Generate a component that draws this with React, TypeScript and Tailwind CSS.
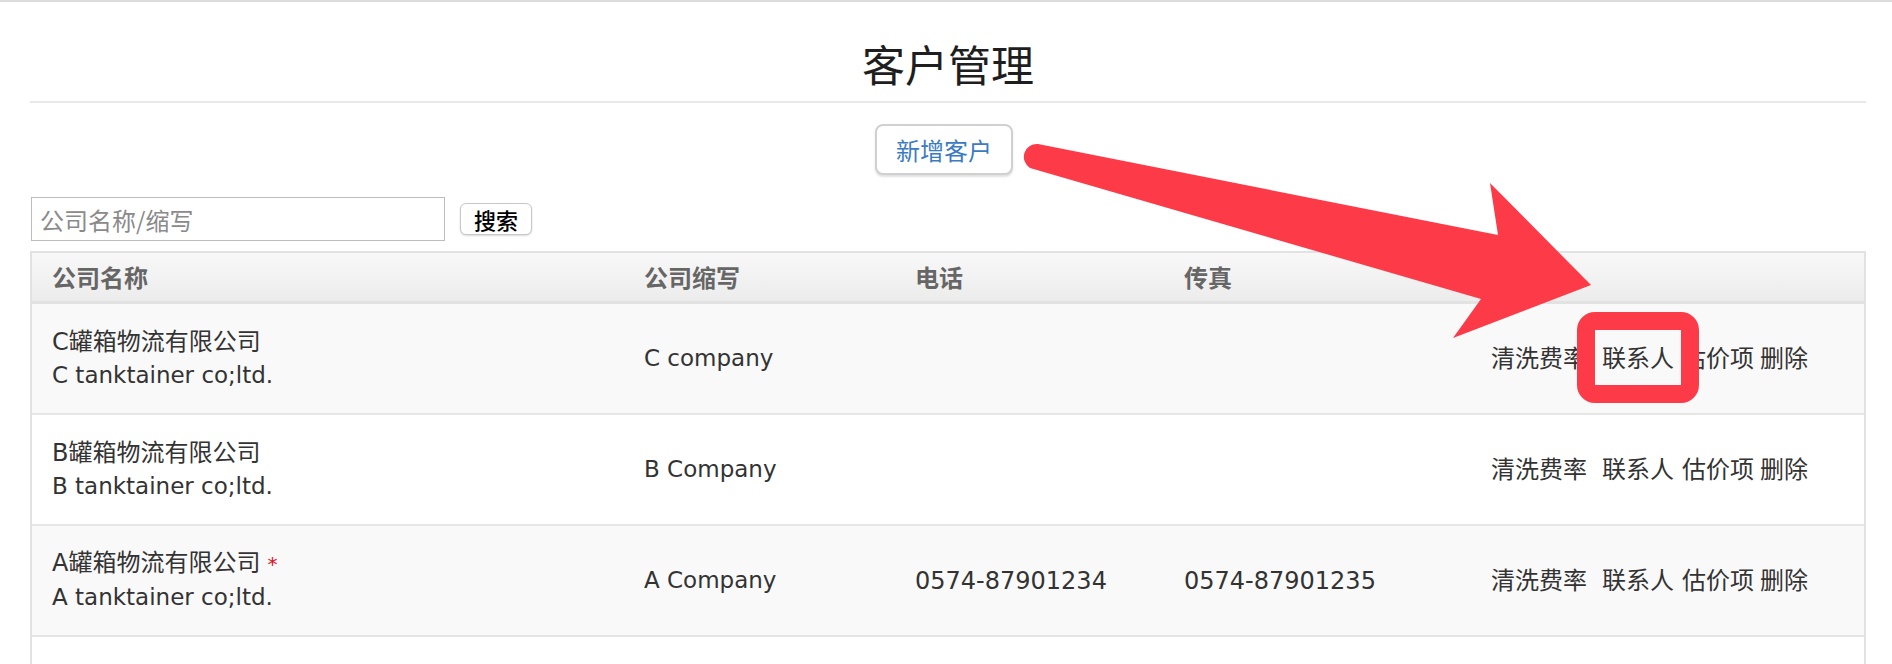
import React from "react";

type Row = {
  cn: string;
  en: string;
  star?: boolean;
  abbr: string;
  tel: string;
  fax: string;
};

const rows: Row[] = [
  { cn: "C罐箱物流有限公司", en: "C tanktainer co;ltd.", abbr: "C company", tel: "", fax: "" },
  { cn: "B罐箱物流有限公司", en: "B tanktainer co;ltd.", abbr: "B Company", tel: "", fax: "" },
  {
    cn: "A罐箱物流有限公司",
    en: "A tanktainer co;ltd.",
    star: true,
    abbr: "A Company",
    tel: "0574-87901234",
    fax: "0574-87901235",
  },
];

function Actions() {
  return (
    <div className="flex items-center whitespace-nowrap text-[24px] text-[#333]">
      <span className="mr-[15px]">清洗费率</span>
      <span className="mr-[8px]">联系人</span>
      <span className="mr-[6px]">估价项</span>
      <span>删除</span>
    </div>
  );
}

export default function App() {
  return (
    <div className="relative h-[664px] w-[1892px] overflow-hidden bg-white font-['DejaVu_Sans','Noto_Sans_CJK_SC',sans-serif] text-[#333]">
      <div className="border-t-2 border-[#dcdcdc]">
        <div className="ml-[30px] w-[1836px]">
          <div className="h-[99px] pt-[38px] text-center text-[43px] leading-[46px] text-[#1e1e1e] font-['Noto_Sans_CJK_SC',sans-serif]">
            客户管理
          </div>
          <div className="h-[2px] bg-[#e9e9e9]" />
          <div className="mt-[21px] flex justify-center pr-[8px]">
            <button className="h-[51px] w-[138px] rounded-[8px] border-2 border-[#d0d0d0] bg-white text-[24px] leading-none text-[#3a7bc2] shadow-[0_2px_2px_rgba(0,0,0,0.12)] font-['Noto_Sans_CJK_SC',sans-serif]">
              新增客户
            </button>
          </div>
          <div className="mt-[22px] flex h-[44px] items-center">
            <input
              className="ml-[1px] h-[44px] w-[414px] border border-[#bdbdbd] px-[8px] text-[24px] text-[#333] outline-none placeholder:text-[#8a8a8a] font-['Noto_Sans_CJK_SC',sans-serif]"
              placeholder="公司名称/缩写"
            />
            <button className="ml-[15px] h-[32px] w-[72px] rounded-[6px] border border-[#c8c8c8] bg-white text-[22px] font-medium leading-none text-black shadow-[0_1px_2px_rgba(0,0,0,0.15)] font-['Noto_Sans_CJK_SC',sans-serif]">
              搜索
            </button>
          </div>

          <div className="mt-[10px] border-x-2 border-t-2 border-[#e2e2e2]">
            <div className="grid h-[51px] grid-cols-[592px_271px_269px_307px_1fr] items-center border-b-[3px] border-[#e2e2e2] bg-linear-to-b from-[#f8f8f8] to-[#ececec] pt-[4px] text-[24px] font-bold text-[#666]">
              <div className="pl-[20px]">公司名称</div>
              <div className="pl-[20px]">公司缩写</div>
              <div className="pl-[20px]">电话</div>
              <div className="pl-[20px]">传真</div>
              <div className="pl-[20px]" />
            </div>
            {rows.map((r, i) => (
              <div
                key={i}
                className={`grid h-[111px] grid-cols-[592px_271px_269px_307px_1fr] items-center border-b-2 border-[#e6e6e6] text-[24px] ${
                  i % 2 === 0 ? "bg-[#f9f9f9]" : "bg-white"
                }`}
              >
                <div className="pl-[20px] leading-[33px]">
                  <div>
                    {r.cn}
                    {r.star && <span className="ml-[7px] text-[20px] text-[#e0101e]">*</span>}
                  </div>
                  <div className="text-[23px]">{r.en}</div>
                </div>
                <div className="pl-[20px] text-[23px]">{r.abbr}</div>
                <div className="pl-[20px]">{r.tel}</div>
                <div className="pl-[20px]">{r.fax}</div>
                <div className="pl-[20px]">
                  <Actions />
                </div>
              </div>
            ))}
            <div className="h-[111px] bg-white" />
          </div>
        </div>
      </div>

      <svg
        className="pointer-events-none absolute left-0 top-0"
        width="1892"
        height="664"
        viewBox="0 0 1892 664"
      >
        <path
          d="M 1038 144 L 1498 235 L 1490 183 L 1591 285 L 1453 338 L 1481 299 L 1030 168 A 13 13 0 0 1 1038 144 Z"
          fill="#fc3a48"
        />
      </svg>
      <div className="pointer-events-none absolute left-[1577px] top-[312px] h-[91px] w-[122px] rounded-[18px] border-[18px] border-[#fc3a48]" />
    </div>
  );
}
